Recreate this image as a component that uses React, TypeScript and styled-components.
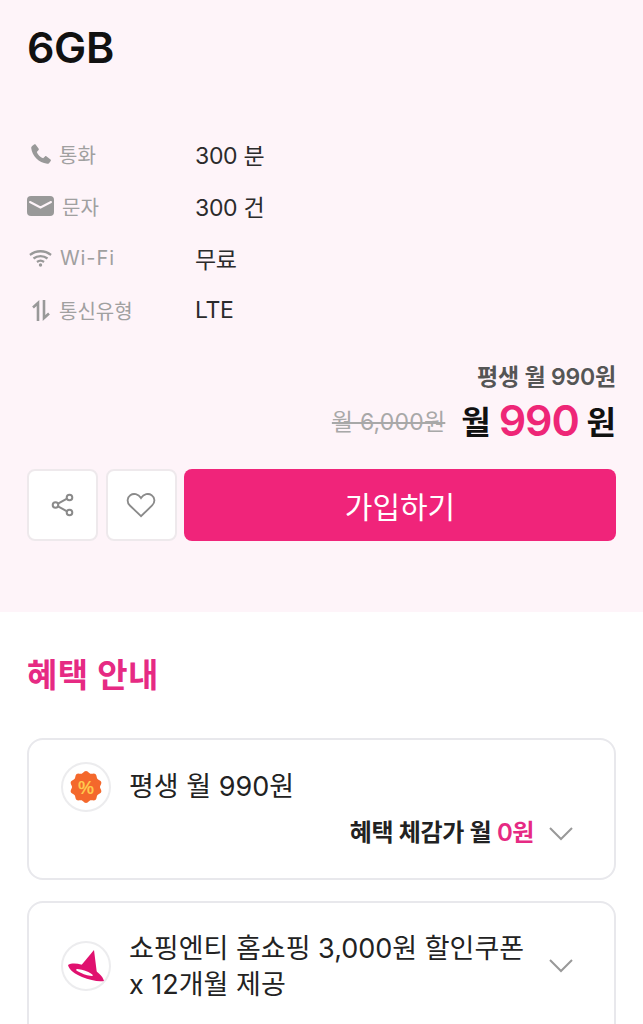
import styled, { createGlobalStyle } from "styled-components";

const GlobalStyle = createGlobalStyle`
  html, body {
    margin: 0;
    padding: 0;
    background: #fff;
    height: 1024px;
    overflow: hidden;
    font-family: Inter, "Noto Sans CJK KR", sans-serif;
    color: #222;
  }
  * { box-sizing: border-box; }
`;

const Hero = styled.section`
  height: 612px;
  background: #fef4f9;
  padding: 20px 27px 0 27px;
`;

const PlanName = styled.h1`
  margin: 0;
  font-size: 43px;
  line-height: 54px;
  font-weight: 600;
  letter-spacing: -0.4px;
  color: #111;
`;

const SpecList = styled.dl`
  margin: 54px 0 0;
  display: grid;
  grid-auto-rows: 52px;
`;

const SpecRow = styled.div`
  display: grid;
  grid-template-columns: 168px 1fr;
  align-items: center;
`;

const SpecLabel = styled.dt<{ $gap: number }>`
  display: flex;
  align-items: center;
  gap: ${(p) => p.$gap}px;
  font-size: 20px;
  color: #a0a0a0;
`;

const WideLabel = styled.span`
  letter-spacing: 0.9px;
`;

const IconSlot = styled.span`
  display: flex;
  width: 27px;
  justify-content: center;
  align-items: center;
`;

const SpecValue = styled.dd`
  margin: 0;
  font-size: 23px;
  color: #2b2b2b;
  letter-spacing: -0.3px;
`;

const PriceBlock = styled.div`
  margin-top: 26px;
  display: flex;
  flex-direction: column;
  align-items: flex-end;
`;

const Lifetime = styled.div`
  font-size: 23px;
  line-height: 30px;
  font-weight: 600;
  color: #555;
  letter-spacing: -0.2px;
`;

const PriceLine = styled.div`
  display: flex;
  align-items: center;
  gap: 16px;
  height: 50px;
  margin-top: 3px;
`;

const OldPrice = styled.s`
  font-size: 23px;
  color: #a8a8a8;
  letter-spacing: 0.2px;
`;

const NowPrice = styled.div`
  display: flex;
  align-items: center;
  gap: 8px;
  font-size: 32px;
  font-weight: 700;
  color: #111;
`;

const Amount = styled.span`
  font-size: 43px;
  line-height: 50px;
  font-weight: 600;
  letter-spacing: -1.2px;
  color: #ee2677;
`;

const Actions = styled.div`
  margin-top: 24px;
  display: flex;
  gap: 7.5px;
`;

const IconButton = styled.button`
  width: 71px;
  height: 72px;
  display: flex;
  align-items: center;
  justify-content: center;
  padding: 0;
  background: #fff;
  border: 2px solid #eee9ec;
  border-radius: 8px;
`;

const JoinButton = styled.button`
  flex: 1;
  height: 72px;
  border: 0;
  border-radius: 8px;
  background: #f0247a;
  color: #fff;
  font-family: inherit;
  font-size: 30px;
  font-weight: 400;
`;

const Benefits = styled.section`
  padding: 38px 27px 0;
`;

const SectionTitle = styled.h2`
  margin: 0 0 37px;
  font-size: 33px;
  line-height: 51px;
  font-weight: 600;
  color: #e62a83;
  letter-spacing: 0.4px;
`;

const Card = styled.article<{ $h: number }>`
  height: ${(p) => p.$h}px;
  margin-bottom: 21px;
  border: 2px solid #e8e8ec;
  border-radius: 16px;
  background: #fff;
`;

const SimpleCard = styled(Card)`
  padding: 22px 32px 0 32px;
`;

const CardHead = styled.div`
  display: flex;
  align-items: center;
  gap: 18px;
`;

const Badge = styled.span`
  flex: none;
  width: 50px;
  height: 50px;
  border-radius: 50%;
  border: 2px solid #ececee;
  display: flex;
  align-items: center;
  justify-content: center;
  background: #fff;
`;

const CardTitle = styled.div`
  font-size: 27px;
  line-height: 38px;
  color: #222;
`;

const CardFoot = styled.div`
  display: flex;
  justify-content: flex-end;
  align-items: center;
  gap: 14px;
  margin-top: 5px;
  margin-right: 8px;
  font-size: 24px;
  line-height: 32px;
  font-weight: 600;
  color: #222;
  letter-spacing: -0.4px;
`;

const Zero = styled.span`
  color: #e62a83;
`;

const WideCard = styled(Card)`
  padding: 27px 32px 0;
  display: flex;
  align-items: flex-start;
  gap: 18px;
`;

const WideBadge = styled(Badge)`
  margin-top: 11px;
`;

const WideText = styled(CardTitle)`
  flex: 1;
  line-height: 36px;
  margin-top: 1px;
  white-space: nowrap;
`;

const ChevronIcon = styled.svg`
  flex: none;
`;

const Chevron = () => (
  <ChevronIcon width="26" height="15" viewBox="0 0 26 15">
    <path d="M2 2l11 11L24 2" fill="none" stroke="#999" strokeWidth="2" />
  </ChevronIcon>
);

const WideChevron = styled.span`
  margin-top: 28px;
  margin-right: 8px;
  display: flex;
`;

// scalloped edge of the discount badge
const scallop = Array.from({ length: 120 }, (_, i) => {
  const t = (i / 120) * Math.PI * 2;
  const r = 15 + 1 * Math.cos(t * 10);
  return `${(16 + r * Math.sin(t)).toFixed(2)},${(16 - r * Math.cos(t)).toFixed(2)}`;
}).join(" ");

export default function App() {
  return (
    <>
      <GlobalStyle />
      <Hero>
        <PlanName>6GB</PlanName>
        <SpecList>
          <SpecRow>
            <SpecLabel $gap={5}>
              <IconSlot>
                <svg width="24" height="24" viewBox="0 0 24 24">
                  <path
                    fill="#999"
                    d="M6.600 2.500l3.100 4.200c.3.4.2.9-.1 1.300L7.800 9.900c1 2.600 3.400 5 6.300 6.300l1.900-1.800c.4-.3.9-.4 1.300-.1l4.200 3.100c.5.4.6 1 .2 1.500l-1.500 2c-.5.7-1.300 1-2.100.9C9.800 20.800 3.200 14.200 2.200 6.100c-.1-.8.2-1.600.9-2.100l2-1.500c.5-.4 1.100-.3 1.500 0z"
                  />
                </svg>
              </IconSlot>
              통화
            </SpecLabel>
            <SpecValue>300 분</SpecValue>
          </SpecRow>
          <SpecRow>
            <SpecLabel $gap={8}>
              <IconSlot>
                <svg width="27" height="20" viewBox="0 0 27 20">
                  <rect width="27" height="20" rx="4" fill="#999" />
                  <path d="M3 6l10.500 5.500L24 6" fill="none" stroke="#fef4f9" strokeWidth="2" strokeLinecap="round" />
                </svg>
              </IconSlot>
              문자
            </SpecLabel>
            <SpecValue>300 건</SpecValue>
          </SpecRow>
          <SpecRow>
            <SpecLabel $gap={6}>
              <IconSlot>
                <svg width="23" height="18" viewBox="0 0 23 18">
                  <g fill="none" stroke="#999" strokeWidth="2.300">
                    <path d="M1 6c6-5 15-5 21 0" />
                    <path d="M4.500 9.500c4-3.200 10-3.200 14 0" />
                    <path d="M8 13c2-1.500 5-1.500 7 0" />
                  </g>
                  <circle cx="11.500" cy="16" r="1.700" fill="#999" />
                </svg>
              </IconSlot>
              <WideLabel>Wi-Fi</WideLabel>
            </SpecLabel>
            <SpecValue>무료</SpecValue>
          </SpecRow>
          <SpecRow>
            <SpecLabel $gap={5}>
              <IconSlot>
                <svg width="18" height="21" viewBox="0 0 18 21">
                  <g fill="none" stroke="#999" strokeWidth="2.600">
                    <path d="M6 21V3L1 7.500" />
                    <path d="M12 0v18l5-4.500" />
                  </g>
                </svg>
              </IconSlot>
              통신유형
            </SpecLabel>
            <SpecValue>LTE</SpecValue>
          </SpecRow>
        </SpecList>
        <PriceBlock>
          <Lifetime>평생 월 990원</Lifetime>
          <PriceLine>
            <OldPrice>월 6,000원</OldPrice>
            <NowPrice>
              월<Amount>990</Amount>원
            </NowPrice>
          </PriceLine>
        </PriceBlock>
        <Actions>
          <IconButton aria-label="공유">
            <svg width="24" height="24" viewBox="0 0 24 24">
              <g fill="none" stroke="#8a8a8a" strokeWidth="2">
                <circle cx="18.500" cy="4.500" r="2.800" />
                <circle cx="4.500" cy="12" r="2.800" />
                <circle cx="18.500" cy="19.500" r="2.800" />
                <path d="M7 10.700l9-5M7 13.300l9 5" />
              </g>
            </svg>
          </IconButton>
          <IconButton aria-label="찜">
            <svg width="30" height="26" viewBox="0 0 32 28">
              <path
                fill="none"
                stroke="#8a8a8a"
                strokeWidth="2"
                d="M16 26L4 14.500C.5 11 1 6 4.500 3.500 8 1 13 2 16 6.500 19 2 24 1 27.500 3.500 31 6 31.500 11 28 14.500z"
              />
            </svg>
          </IconButton>
          <JoinButton>가입하기</JoinButton>
        </Actions>
      </Hero>
      <Benefits>
        <SectionTitle>혜택 안내</SectionTitle>
        <SimpleCard $h={142}>
          <CardHead>
            <Badge>
              <svg width="32" height="32" viewBox="0 0 32 32">
                <polygon fill="#f4682c" points={scallop} />
                <text
                  x="16"
                  y="22.500"
                  textAnchor="middle"
                  fontSize="18"
                  fontWeight="700"
                  fill="#ffc94d"
                  fontFamily="Liberation Sans, sans-serif"
                >
                  %
                </text>
              </svg>
            </Badge>
            <CardTitle>평생 월 990원</CardTitle>
          </CardHead>
          <CardFoot>
            <span>
              혜택 체감가 월 <Zero>0원</Zero>
            </span>
            <Chevron />
          </CardFoot>
        </SimpleCard>
        <WideCard $h={160}>
          <WideBadge>
            <svg width="36" height="32" viewBox="0 0 36 32">
              <path fill="#e0116f" d="M26 0L11 18l18 6z" />
              <path
                fill="#e0116f"
                d="M0 15C5 12 14 14 22 18 29 21 35 26 36 31 30 32 22 30 14 27 7 24 1 20 0 15z"
              />
              <ellipse cx="16.500" cy="22.500" rx="9" ry="1.800" fill="#fff" transform="rotate(20 16.500 22.500)" />
            </svg>
          </WideBadge>
          <WideText>
            쇼핑엔티 홈쇼핑 3,000원 할인쿠폰
            <br />x 12개월 제공
          </WideText>
          <WideChevron>
            <Chevron />
          </WideChevron>
        </WideCard>
      </Benefits>
    </>
  );
}
